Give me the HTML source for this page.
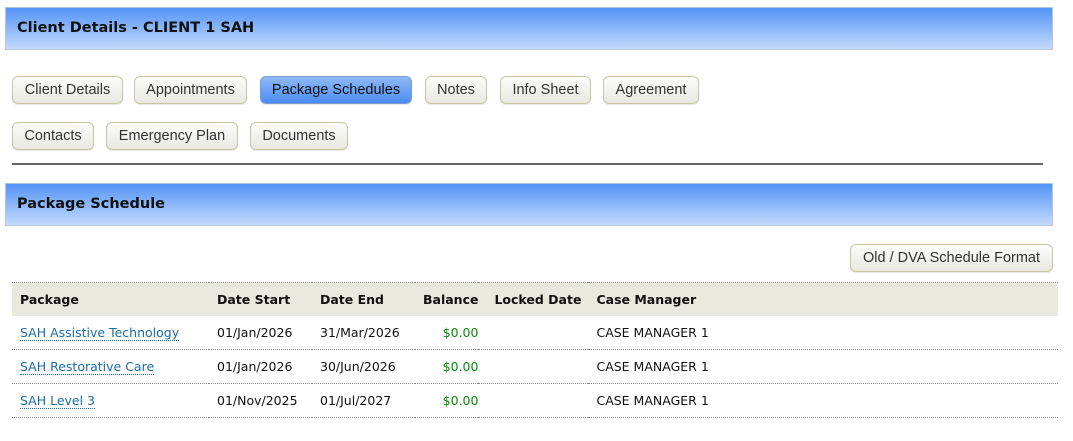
<!DOCTYPE html>
<html><head><style>
body{margin:0;background:#fff;width:1073px;height:441px;position:relative;font-family:"DejaVu Sans",sans-serif;overflow:hidden}
.hdr{position:absolute;left:5px;width:1046px;height:41px;border:1px solid #b8c4d8;background:linear-gradient(#5494f6,#c4dafd);}
.hdr span{position:absolute;left:11px;top:12px;font-weight:bold;font-size:14.5px;color:#111}
.btn{position:absolute;height:26px;line-height:27px;border:1px solid #c9c6a6;border-radius:6px;background:linear-gradient(#fbfbf8,#e9e9e2);font-family:"Liberation Sans",Arial,sans-serif;font-size:14.5px;color:#333;text-align:center;box-shadow:0 1px 1px rgba(0,0,0,.1)}
.btn.act{background:linear-gradient(#8fb9f8,#4a8cf2);border-color:#7a9ed4;color:#111}
.sep{position:absolute;left:12px;top:163px;width:1031px;height:2px;background:#666}
table{position:absolute;left:12px;top:282px;width:1046px;border-collapse:collapse;font-size:12.5px}
th{background:#eae9df;text-align:left;height:33px;font-weight:bold;color:#111;padding:0 0 0 8px;border-top:1px dotted #888}
td{height:33px;padding:0 0 0 8px;border-bottom:1px dotted #888;color:#111}
a{color:#1d6ca8;text-decoration:none;border-bottom:1px dotted #1d6ca8}
.g{color:#0a8a0a;text-align:right;padding-right:0}
</style></head><body>
<div class="hdr" style="top:7px"><span>Client Details - CLIENT 1 SAH</span></div>
<div class="btn" style="left:12px;top:76px;width:109px">Client Details</div>
<div class="btn" style="left:134px;top:76px;width:111px">Appointments</div>
<div class="btn act" style="left:260px;top:76px;width:150px">Package Schedules</div>
<div class="btn" style="left:425px;top:76px;width:60px">Notes</div>
<div class="btn" style="left:500px;top:76px;width:89px">Info Sheet</div>
<div class="btn" style="left:603px;top:76px;width:94px">Agreement</div>
<div class="btn" style="left:12px;top:122px;width:80px">Contacts</div>
<div class="btn" style="left:106px;top:122px;width:130px">Emergency Plan</div>
<div class="btn" style="left:250px;top:122px;width:96px">Documents</div>
<div class="sep"></div>
<div class="hdr" style="top:183px"><span>Package Schedule</span></div>
<div class="btn" style="left:850px;top:244px;width:201px">Old / DVA Schedule Format</div>
<table>
<tr><th style="width:189px">Package</th><th style="width:95px">Date Start</th><th style="width:95px">Date End</th><th style="width:54px">Balance</th><th style="width:94px;padding-left:16px">Locked Date</th><th>Case Manager</th></tr>
<tr><td><a>SAH Assistive Technology</a></td><td>01/Jan/2026</td><td>31/Mar/2026</td><td class="g">$0.00</td><td></td><td>CASE MANAGER 1</td></tr>
<tr><td><a>SAH Restorative Care</a></td><td>01/Jan/2026</td><td>30/Jun/2026</td><td class="g">$0.00</td><td></td><td>CASE MANAGER 1</td></tr>
<tr><td><a>SAH Level 3</a></td><td>01/Nov/2025</td><td>01/Jul/2027</td><td class="g">$0.00</td><td></td><td>CASE MANAGER 1</td></tr>
</table>
</body></html>
